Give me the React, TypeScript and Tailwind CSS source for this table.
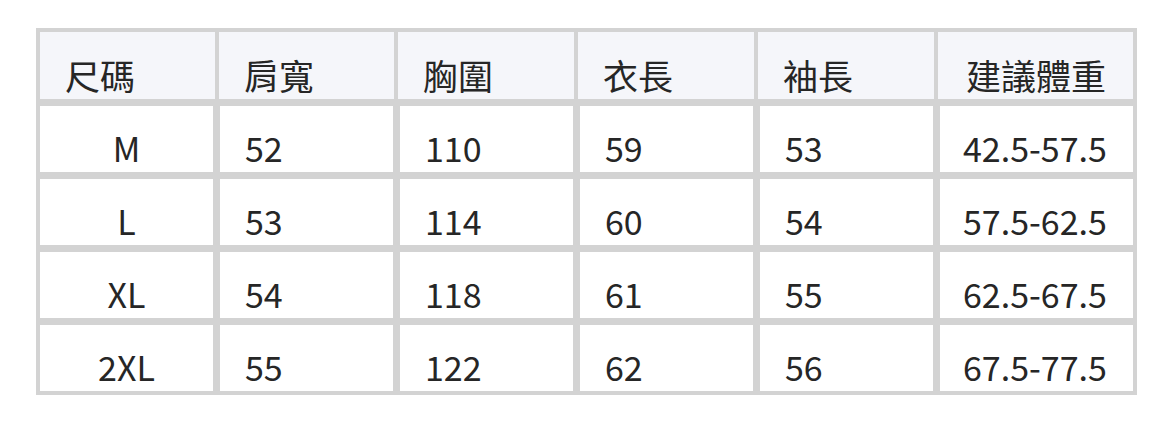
const headers = ['尺碼', '肩寬', '胸圍', '衣長', '袖長', '建議體重'];

const rows = [
  ['M', '52', '110', '59', '53', '42.5-57.5'],
  ['L', '53', '114', '60', '54', '57.5-62.5'],
  ['XL', '54', '118', '61', '55', '62.5-67.5'],
  ['2XL', '55', '122', '62', '56', '67.5-77.5'],
];

const headWidths = ['w-[175px]', 'w-[175px]', 'w-[176px]', 'w-[176px]', 'w-[176px]', 'w-[195px]'];

export default function App() {
  return (
    <div
      className="w-[1172px] h-[422px] bg-white pt-[28px] pl-[36px]"
      style={{ fontFamily: '"Noto Sans CJK TC", "Noto Sans", sans-serif' }}
    >
      <div className="w-[1101px] border-[4px] border-[#d3d3d3] bg-[#d3d3d3] text-[#262626]">
        {/* Header */}
        <div className="flex gap-[4px]">
          {headers.map((h, i) => (
            <div
              key={h}
              className={`${headWidths[i]} h-[67px] bg-[#f5f6fa] flex items-end pb-[4px] text-[35px] ${
                i === 5 ? 'pl-[28px]' : 'pl-[25px]'
              }`}
            >
              <span className="leading-[40px]">{h}</span>
            </div>
          ))}
        </div>

        {/* Body */}
        <div className="flex flex-col gap-[7px] mt-[7px]">
          {rows.map((r) => (
            <div key={r[0]} className="flex gap-[7px]">
              {r.map((c, i) => (
                <div
                  key={i}
                  className={`h-[66px] bg-white flex items-end pb-[4px] text-[34px] ${
                    i === 0
                      ? 'w-[173px] justify-center'
                      : i === 5
                      ? 'w-[193px] pl-[23px]'
                      : 'w-[173px] pl-[25px]'
                  }`}
                >
                  <span className="leading-[40px]">{c}</span>
                </div>
              ))}
            </div>
          ))}
        </div>
      </div>
    </div>
  );
}
